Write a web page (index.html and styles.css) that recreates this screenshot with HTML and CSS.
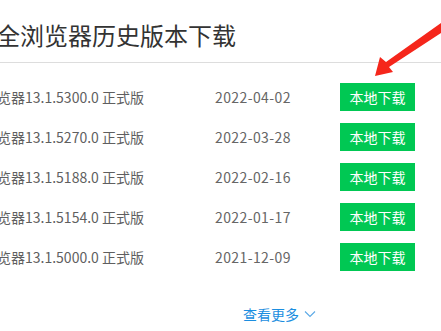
FILE: index.html
```html
<!DOCTYPE html>
<html lang="zh-CN">
<head>
<meta charset="utf-8">
<title>历史版本下载</title>
<link rel="stylesheet" href="styles.css">
</head>
<body>
<div class="page">
  <h1 class="title">全浏览器历史版本下载</h1>
  <ul class="list">
    <li class="row"><span class="name">览器13.1.5300.0 正式版</span><span class="date">2022-04-02</span><a class="btn">本地下载</a></li>
    <li class="row"><span class="name">览器13.1.5270.0 正式版</span><span class="date">2022-03-28</span><a class="btn">本地下载</a></li>
    <li class="row"><span class="name">览器13.1.5188.0 正式版</span><span class="date">2022-02-16</span><a class="btn">本地下载</a></li>
    <li class="row"><span class="name">览器13.1.5154.0 正式版</span><span class="date">2022-01-17</span><a class="btn">本地下载</a></li>
    <li class="row"><span class="name">览器13.1.5000.0 正式版</span><span class="date">2021-12-09</span><a class="btn">本地下载</a></li>
  </ul>
  <div class="more"><a class="more-link">查看更多<svg class="chev" width="12" height="8" viewBox="0 0 12 8"><path d="M1 1.5 L6 6.5 L11 1.5" fill="none" stroke="#5aa9e6" stroke-width="1.1"/></svg></a></div>
</div>
<svg class="arrow" width="441" height="90" viewBox="0 0 441 90">
  <polygon points="441,23 386,62 380,57 375,76 393,72 389,67 441,33" fill="#f5261b"/>
</svg>
</body>
</html>
```
FILE: styles.css
```css
html, body {
  margin: 0;
  padding: 0;
  background: #fff;
  overflow: hidden;
}
body {
  width: 441px;
  height: 331px;
  position: relative;
  font-family: "Noto Sans CJK SC", "Noto Sans", sans-serif;
}
.page {
  margin-left: -3px;
}
.title {
  margin: 0 0 0 -1px;
  padding: 17px 0 9px;
  font-size: 24px;
  line-height: 36px;
  font-weight: 400;
  color: #333;
  border-bottom: 1px solid #ddd;
}
.list {
  list-style: none;
  margin: 14px 0 0;
  padding: 0;
}
.row {
  display: flex;
  align-items: center;
  height: 40px;
}
.name {
  width: 218px;
  font-size: 14px;
  color: #5f5f5f;
  white-space: nowrap;
}
.date {
  width: 125px;
  font-size: 14px;
  letter-spacing: 0.4px;
  color: #666;
}
.btn {
  display: flex;
  align-items: center;
  justify-content: center;
  width: 75px;
  height: 28px;
  background: #00c853;
  color: #fff;
  font-size: 14px;
}
.more {
  margin-top: 24px;
  padding-left: 246px;
}
.more-link {
  display: inline-flex;
  align-items: center;
  font-size: 14px;
  line-height: 20px;
  color: #1b8ee0;
}
.chev {
  margin-left: 5px;
}
.arrow {
  position: absolute;
  left: 0;
  top: 0;
}
```
